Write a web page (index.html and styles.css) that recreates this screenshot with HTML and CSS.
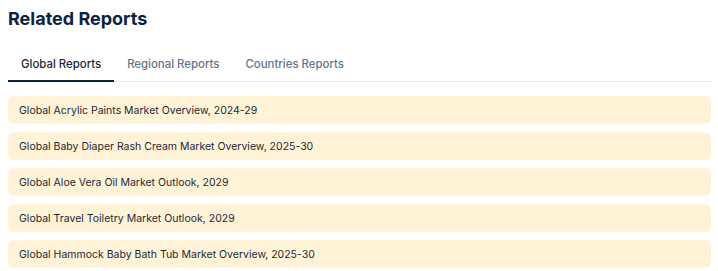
FILE: index.html
```html
<!DOCTYPE html>
<html>
<head>
<meta charset="utf-8">
<link rel="stylesheet" href="styles.css">
</head>
<body>
<section class="related">
  <h2 class="title">Related Reports</h2>
  <nav class="tabs">
    <span class="tab active">Global Reports</span>
    <span class="tab">Regional Reports</span>
    <span class="tab">Countries Reports</span>
  </nav>
  <ul class="list">
    <li class="item">Global Acrylic Paints Market Overview, 2024-29</li>
    <li class="item">Global Baby Diaper Rash Cream Market Overview, 2025-30</li>
    <li class="item">Global Aloe Vera Oil Market Outlook, 2029</li>
    <li class="item">Global Travel Toiletry Market Outlook, 2029</li>
    <li class="item">Global Hammock Baby Bath Tub Market Overview, 2025-30</li>
  </ul>
</section>
</body>
</html>
```
FILE: styles.css
```css
html, body {
  margin: 0;
  padding: 0;
  background: #ffffff;
}
body {
  font-family: Inter, "Noto Sans", sans-serif;
}
.related {
  width: 703px;
  padding: 6px 0 0 8px;
}
.title {
  margin: 0;
  font-size: 18px;
  line-height: 26px;
  font-weight: 700;
  color: #0b2340;
}
.tabs {
  display: flex;
  margin-top: 24px;
  border-bottom: 1px solid #e5e7eb;
}
.tab {
  padding: 0 13px 8px;
  font-size: 11.4px;
  line-height: 16px;
  font-weight: 500;
  color: #64748b;
  margin-bottom: -1px;
  border-bottom: 2px solid transparent;
}
.tab.active {
  color: #1e293b;
  border-bottom-color: #0b2340;
}
.list {
  list-style: none;
  margin: 14px 0 0;
  padding: 0;
  display: flex;
  flex-direction: column;
  gap: 8px;
}
.item {
  height: 28px;
  display: flex;
  align-items: center;
  padding: 0 11px;
  background: #fef3d6;
  border-radius: 6px;
  font-size: 10.5px;
  color: #1f2937;
}
```
